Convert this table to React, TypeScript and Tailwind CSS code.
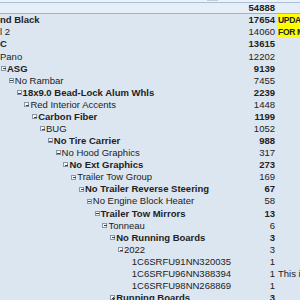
import React from 'react';

type Row = {
  label: string;
  level: number;
  value: string;
  bold?: boolean;
  box?: 'minus' | 'plus' | 'none' | 'flat';
  shift?: number;
  note?: string;
  yellow?: boolean;
};

const rows: Row[] = [
  { label: 'nd Black', level: 0, value: '17654', bold: true, box: 'flat', note: 'UPDA', yellow: true },
  { label: 'l 2', level: 0, value: '14060', box: 'flat', note: 'FOR M', yellow: true },
  { label: 'C', level: 0, value: '13615', bold: true, box: 'flat', shift: -4 },
  { label: 'Pano', level: 0, value: '12202', box: 'flat' },
  { label: 'ASG', level: 0, value: '9139', bold: true, box: 'minus' },
  { label: 'No Rambar', level: 1, value: '7455', box: 'minus' },
  { label: '18x9.0 Bead-Lock Alum Whls', level: 2, value: '2239', bold: true, box: 'minus' },
  { label: 'Red Interior Accents', level: 3, value: '1448', box: 'minus' },
  { label: 'Carbon Fiber', level: 4, value: '1199', bold: true, box: 'minus' },
  { label: 'BUG', level: 5, value: '1052', box: 'minus' },
  { label: 'No Tire Carrier', level: 6, value: '988', bold: true, box: 'minus' },
  { label: 'No Hood Graphics', level: 7, value: '317', box: 'minus' },
  { label: 'No Ext Graphics', level: 8, value: '273', bold: true, box: 'minus' },
  { label: 'Trailer Tow Group', level: 9, value: '169', box: 'minus' },
  { label: 'No Trailer Reverse Steering', level: 10, value: '67', bold: true, box: 'minus' },
  { label: 'No Engine Block Heater', level: 11, value: '58', box: 'minus' },
  { label: 'Trailer Tow Mirrors', level: 12, value: '13', bold: true, box: 'minus' },
  { label: 'Tonneau', level: 13, value: '6', box: 'minus' },
  { label: 'No Running Boards', level: 14, value: '3', bold: true, box: 'minus' },
  { label: '2022', level: 15, value: '3', box: 'minus' },
  { label: '1C6SRFU91NN320035', level: 16, value: '1', box: 'none' },
  { label: '1C6SRFU96NN388394', level: 16, value: '1', box: 'none', note: 'This is' },
  { label: '1C6SRFU98NN268869', level: 16, value: '1', box: 'none' },
  { label: 'Running Boards', level: 14, value: '3', bold: true, box: 'plus' },
];

function Toggle({ kind }: { kind: 'minus' | 'plus' }) {
  return (
    <span className="relative mr-[1px] inline-block h-[5px] w-[5px] shrink-0 border border-[#8a96a6] bg-[#f4f7fb]">
      <span className="absolute left-[0.5px] top-[1.5px] h-[1px] w-[3px] bg-[#3c4450]" />
      {kind === 'plus' && <span className="absolute left-[1.5px] top-[0.5px] h-[3px] w-[1px] bg-[#3c4450]" />}
    </span>
  );
}

export default function App() {
  return (
    <div
      className="h-[300px] w-[300px] overflow-hidden bg-[#dce6f1] text-[9.5px] leading-none text-[#222]"
      style={{ fontFamily: '"Liberation Sans", Arial, sans-serif' }}
    >
      <div className="relative h-[3px] border-b border-[#a9c0dc] bg-[#eef1f5]">
        <span className="absolute left-[207px] top-0 h-[1px] w-[11px] bg-[#c9ccd1]" />
      </div>
      <div className="flex h-[11px] items-center border-b border-[#95b3d7] bg-[#e6eef7]">
        <div className="w-[277px] pr-[2px] text-right font-bold">54888</div>
        <div className="flex-1" />
      </div>
      {rows.map((r, i) => (
        <div key={i} className="flex h-[12.08px] items-center">
          <div className="relative flex h-full w-[277px] shrink-0 items-center">
            <div
              className={`absolute left-0 flex items-center whitespace-nowrap ${r.bold ? 'font-bold' : ''}`}
              style={{ paddingLeft: (r.box === 'flat' ? 0 : 1) + r.level * 7.8 + (r.shift ?? 0) }}
            >
              {(r.box === 'minus' || r.box === 'plus') && <Toggle kind={r.box} />}
              {r.box === 'none' && <span className="inline-block w-[6px]" />}
              <span>{r.label}</span>
            </div>
            <div className={`ml-auto pr-[2px] ${r.bold ? 'font-bold' : ''}`}>{r.value}</div>
          </div>
          <div
            className={`flex h-full min-w-0 flex-1 items-center overflow-hidden whitespace-nowrap pl-[1px] ${
              r.yellow ? 'bg-[#ffff00] text-[8.5px] font-bold tracking-[-0.3px]' : ''
            }`}
          >
            {r.note}
          </div>
        </div>
      ))}
    </div>
  );
}
